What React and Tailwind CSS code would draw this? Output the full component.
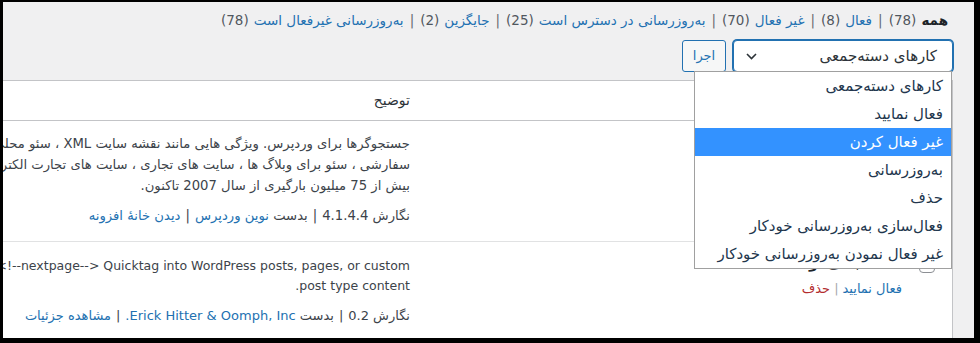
import React from "react";

const filters = [
  { label: "همه", count: 78, current: true },
  { label: "فعال", count: 8 },
  { label: "غیر فعال", count: 70 },
  { label: "به‌روزرسانی در دسترس است", count: 25 },
  { label: "جایگزین", count: 2 },
  { label: "به‌روزرسانی غیرفعال است", count: 78 },
];

const bulkActions = [
  "کارهای دسته‌جمعی",
  "فعال نمایید",
  "غیر فعال کردن",
  "به‌روزرسانی",
  "حذف",
  "فعال‌سازی به‌روزرسانی خودکار",
  "غیر فعال نمودن به‌روزرسانی خودکار",
];

const Checkbox = () => (
  <span className="block w-4 h-4 rounded-[4px] border border-[#8c8f94] bg-white"></span>
);

const Sep = () => <span className="mx-[5px] text-[#3c434a]">|</span>;

const App = () => {
  return (
    <div className="w-[980px] h-[343px] bg-black pt-[2px] pl-[3px] pr-[6px] pb-[5px]">
      <div
        dir="rtl"
        className="relative h-full overflow-hidden bg-[#f0f0f1] pr-[21px] font-['DejaVu_Sans',sans-serif] text-[13px] text-[#3c434a]"
      >
        {/* status filters */}
        <ul className="flex items-center pt-[8px] pr-[5px] leading-[20px] text-[13.5px] text-[#646970] whitespace-nowrap">
          {filters.map((f, i) => (
            <li key={f.label} className="flex items-center">
              {f.current ? (
                <span className="font-bold text-[#1d2327]">{f.label}</span>
              ) : (
                <span className="text-[#2271b1]">{f.label}</span>
              )}
              <span className="mr-[5px] text-[#50575e]">({f.count})</span>
              {i < filters.length - 1 && <span className="mx-[6px]">|</span>}
            </li>
          ))}
        </ul>

        {/* bulk actions */}
        <div className="flex items-center gap-[7px] mt-[10px] h-[32px]">
          <div className="flex items-center justify-between w-[220px] h-[32px] pr-[15px] pl-[12px] bg-white border border-[#2271b1] ring-1 ring-[#2271b1] rounded-[4px] text-[15px] text-[#2c3338]">
            <span>کارهای دسته‌جمعی</span>
            <svg width="11" height="7" viewBox="0 0 11 7" fill="none">
              <path d="M1 1l4.5 4.5L10 1" stroke="#2c3338" strokeWidth="1.6" />
            </svg>
          </div>
          <button className="h-[32px] w-[44px] border border-[#2271b1] rounded-[3px] bg-[#f6f7f7] text-[#2271b1] text-[13px]">
            اجرا
          </button>
        </div>

        {/* plugins table */}
        <div className="mt-[8px] bg-white border-t border-r border-[#c3c4c7]">
          {/* header */}
          <div className="flex h-[40px] border-b border-[#c3c4c7] text-[14px] text-[#2c3338]">
            <div className="w-[40px] shrink-0 flex items-center pr-[17px]">
              <Checkbox />
            </div>
            <div className="w-[492px] shrink-0 flex items-center pr-[10px]">افزونه</div>
            <div className="flex-1 min-w-0 flex items-center pr-[10px]">توضیح</div>
          </div>

          {/* row 1 */}
          <div className="flex h-[121px] border-b border-[#e1e2e3]">
            <div className="w-[40px] shrink-0 pt-[15px] pr-[17px]">
              <Checkbox />
            </div>
            <div className="w-[492px] shrink-0 pt-[11px] pr-[10px] leading-[20px]">
              <div className="font-bold text-[14px] text-[#1d2327]">All in One SEO</div>
              <div className="mt-[6px]">
                <span className="text-[#2271b1]">فعال نمایید</span>
                <span className="mx-[4px] text-[#a7aaad]">|</span>
                <span className="text-[#b32d2e]">حذف</span>
              </div>
            </div>
            <div className="flex-1 min-w-0 overflow-hidden pt-[12px] pr-[10px] text-[13.2px] whitespace-nowrap">
              <div className="leading-[21px]">
                <div>جستجوگرها برای وردپرس. ویژگی هایی مانند نقشه سایت XML ، سئو محلی ، سئو ووکامرس ، اسکیما و</div>
                <div>سفارشی ، سئو برای وبلاگ ها ، سایت های تجاری ، سایت های تجارت الکترونیک و بیشتر</div>
                <div>بیش از 75 میلیون بارگیری از سال 2007 تاکنون.</div>
              </div>
              <div className="mt-[10px] leading-[20px]">
                نگارش 4.1.4.4
                <Sep />
                بدست <span className="text-[#2271b1]">نوین وردپرس</span>
                <Sep />
                <span className="text-[#2271b1]">دیدن خانهٔ افزونه</span>
              </div>
            </div>
          </div>

          {/* row 2 */}
          <div className="flex h-[120px]">
            <div className="w-[40px] shrink-0 pt-[15px] pr-[17px]">
              <Checkbox />
            </div>
            <div className="w-[492px] shrink-0 pt-[11px] pr-[10px] leading-[20px]">
              <div className="font-bold text-[14px] text-[#1d2327]">صفحه‌بندی نوشته</div>
              <div className="mt-[6px]">
                <span className="text-[#2271b1]">فعال نمایید</span>
                <span className="mx-[4px] text-[#a7aaad]">|</span>
                <span className="text-[#b32d2e]">حذف</span>
              </div>
            </div>
            <div className="flex-1 min-w-0 overflow-hidden pt-[14px] pr-[10px] text-[13px] whitespace-nowrap">
              <div className="leading-[20px] text-[12.5px]">
                <div className="flex">
                  <span dir="ltr" className="shrink-0">Adds the {"<!--nextpage-->"} Quicktag into WordPress posts, pages, or custom</span>
                </div>
                <div>post type content.</div>
              </div>
              <div className="mt-[10px] leading-[20px]">
                نگارش 0.2
                <Sep />
                بدست <span className="text-[#2271b1]">Erick Hitter &amp; Oomph, Inc.</span>
                <Sep />
                <span className="text-[#2271b1]">مشاهده جزئیات</span>
              </div>
            </div>
          </div>
        </div>

        {/* open select list */}
        <ul className="absolute top-[69px] right-[22px] w-[258px] bg-white border border-[#a0a0a0] text-[15px] text-[#22364d]">
          {bulkActions.map((a, i) => (
            <li
              key={a}
              className={
                i === 2
                  ? "h-[28px] flex items-center pr-[8px] bg-[#3392ff] text-white"
                  : "h-[28px] flex items-center pr-[8px]"
              }
            >
              {a}
            </li>
          ))}
        </ul>
      </div>
    </div>
  );
};

export default App;
